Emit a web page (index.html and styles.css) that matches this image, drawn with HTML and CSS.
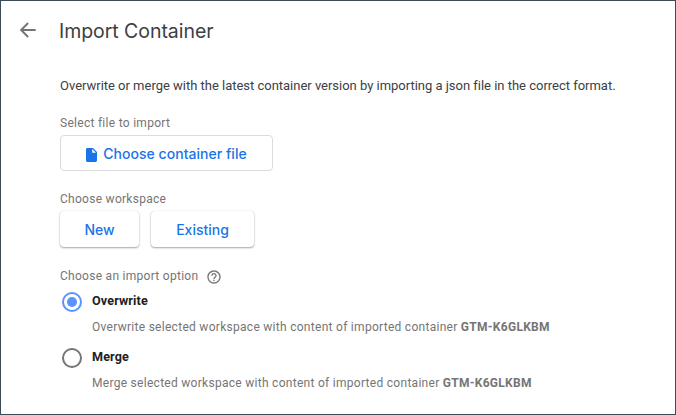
FILE: index.html
```html
<!DOCTYPE html>
<html lang="en">
<head>
<meta charset="utf-8">
<title>Import Container</title>
<link rel="stylesheet" href="styles.css">
</head>
<body>
<main class="panel">
  <header class="header">
    <svg class="back" viewBox="0 0 16 16" aria-hidden="true"><path d="M15.7 8H1.2M8.1 1L1.2 8l6.9 7"/></svg>
    <h1 class="title">Import Container</h1>
  </header>
  <div class="content">
    <p class="intro">Overwrite or merge with the latest container version by importing a json file in the correct format.</p>
    <div class="label">Select file to import</div>
    <button class="file-button">
      <svg class="file-icon" viewBox="0 0 11 14" aria-hidden="true"><path fill-rule="evenodd" d="M1.4 0H7l4 4v8.6c0 .8-.6 1.4-1.4 1.4H1.4C.6 14 0 13.400 0 12.600V1.400C0 .6.6 0 1.400 0zM6.200 1v3.800H10z"/></svg>
      <span class="file-text">Choose container file</span>
    </button>
    <div class="label">Choose workspace</div>
    <div class="workspaces">
      <button class="raised new">New</button>
      <button class="raised existing">Existing</button>
    </div>
    <div class="label label-option"><span>Choose an import option</span>
      <svg class="help" viewBox="0 0 24 24" aria-hidden="true"><path d="M11 18h2v-2h-2v2zm1-16C6.480 2 2 6.480 2 12s4.480 10 10 10 10-4.480 10-10S17.520 2 12 2zm0 18c-4.410 0-8-3.590-8-8s3.590-8 8-8 8 3.590 8 8-3.590 8-8 8zm0-14c-2.210 0-4 1.790-4 4h2c0-1.100.9-2 2-2s2 .9 2 2c0 2-3 1.750-3 5h2c0-2.250 3-2.500 3-5 0-2.210-1.790-4-4-4z"/></svg>
    </div>
    <div class="option">
      <span class="radio selected"></span>
      <div>
        <div class="name">Overwrite</div>
        <div class="hint">Overwrite selected workspace with content of imported container <b>GTM-K6GLKBM</b></div>
      </div>
    </div>
    <div class="option">
      <span class="radio"></span>
      <div>
        <div class="name">Merge</div>
        <div class="hint">Merge selected workspace with content of imported container <b>GTM-K6GLKBM</b></div>
      </div>
    </div>
  </div>
</main>
</body>
</html>
```
FILE: styles.css
```css
* { box-sizing: border-box; }
body { margin: 0; background: #fff; font-family: Roboto, sans-serif; }
.panel { height: 415px; border: 1px solid #3c4a56; overflow: hidden; white-space: nowrap; }
.header { display: flex; align-items: center; height: 58px; padding-left: 19px; }
.back { width: 16px; height: 16px; margin-right: 23px; fill: none; stroke: #757575; stroke-width: 1.9; }
.title { margin: 1px 0 0; font: 400 19.5px/28px Inter, sans-serif; color: #3c4043; letter-spacing: -.05px; }
.content { padding: 18px 0 0 59px; }
.intro { margin: 0; font-size: 13px; line-height: 18px; letter-spacing: -.015px; color: #3c4043; }
.label { height: 16px; margin-top: 20px; font-size: 12px; line-height: 16px; letter-spacing: .28px; color: #757575; }
button { display: flex; align-items: center; justify-content: center; padding: 0; background: #fff; color: #1a73e8; font: 500 14px/20px Inter, sans-serif; }
.file-button { width: 213px; height: 36px; margin-top: 4px; border: 1px solid #dadce0; border-radius: 4px; }
.file-icon { width: 11px; height: 14px; margin: 3px 6px 0 0; fill: #1a73e8; }
.file-text { padding-top: 2px; letter-spacing: .03px; }
.workspaces { display: flex; gap: 12px; margin-top: 4px; }
.raised { height: 36px; padding-top: 2px; border: 0; border-radius: 4px; box-shadow: 0 1px 2px rgba(0,0,0,.35), 0 0 1px rgba(0,0,0,.18); }
.new { width: 79px; }
.existing { width: 103px; }
.label-option { display: flex; align-items: center; gap: 8px; margin-top: 21px; }
.help { width: 16px; height: 16px; margin-top: 1px; fill: #757575; }
.option { display: flex; height: 56px; padding: 8px 0 0 2px; }
.radio { display: flex; align-items: center; justify-content: center; width: 20px; height: 20px; margin: 0 10px 0 0; border: 2px solid #757575; border-radius: 50%; }
.selected { border-color: #5794ff; }
.selected::after { content: ""; width: 10px; height: 10px; border-radius: 50%; background: #5794ff; }
.name { margin-top: 1px; font-size: 12.6px; font-weight: 700; line-height: 16px; letter-spacing: .12px; color: #212121; }
.hint { margin-top: 10px; font-size: 12px; line-height: 16px; letter-spacing: .285px; color: #757575; white-space: pre; }
```
